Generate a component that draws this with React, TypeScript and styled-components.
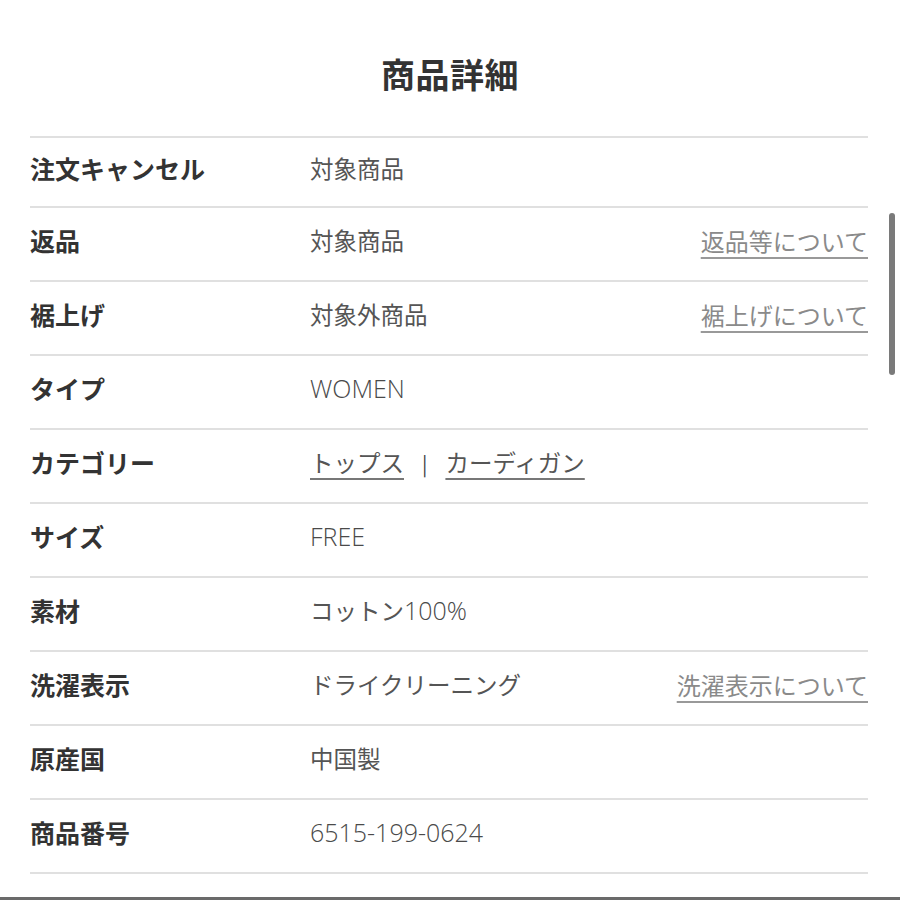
import React from "react";
import styled, { createGlobalStyle } from "styled-components";

const Global = createGlobalStyle`
  html, body { margin: 0; padding: 0; background: #fff; }
  body { font-family: "Noto Sans CJK JP", "Noto Sans", sans-serif; }
`;

const Page = styled.div`
  position: relative;
  width: 900px;
  height: 900px;
  background: #fff;
  overflow: hidden;
  box-sizing: border-box;
  border-bottom: 3px solid #6a6a6a;
`;

const Title = styled.h1`
  margin: 0;
  height: 136px;
  display: flex;
  align-items: center;
  justify-content: center;
  padding-top: 10px;
  box-sizing: border-box;
  font-size: 34px;
  font-weight: 700;
  color: #333;
  letter-spacing: 0.5px;
`;

const Table = styled.div`
  margin: 0 32px 0 30px;
  border-top: 2px solid #e0e0e0;
`;

const Row = styled.div<{ $h: number }>`
  display: grid;
  grid-template-columns: 280px 1fr auto;
  align-items: center;
  height: ${(p) => p.$h}px;
  padding-bottom: 8px;
  border-bottom: 2px solid #e0e0e0;
  box-sizing: border-box;
`;

const Label = styled.div`
  font-size: 25px;
  font-weight: 700;
  color: #333;
`;

const Value = styled.div`
  font-size: 23.5px;
  font-weight: 400;
  color: #555;
  display: flex;
  align-items: baseline;
  gap: 18px;
`;

const Latin = styled.span`
  font-family: "Open Sans", "Noto Sans", sans-serif;
  font-weight: 300;
  font-size: 25px;
  color: #4a4a4a;
`;

const ValueLink = styled.span`
  text-decoration: underline;
  text-underline-offset: 6px;
  text-decoration-thickness: 2px;
  text-decoration-color: #777;
`;

const Sep = styled.span`
  color: #444;
  font-size: 20px;
`;

const Link = styled.a`
  font-size: 24px;
  color: #8a8a8a;
  text-decoration: underline;
  text-underline-offset: 6px;
  text-decoration-thickness: 2px;
  text-decoration-color: #999;
`;

const Scrollbar = styled.div`
  position: absolute;
  left: 889px;
  top: 213px;
  width: 6px;
  height: 162px;
  border-radius: 3px;
  background: #7a7a7a;
`;

function Mixed({ text }: { text: string }) {
  const parts = text.match(/[\x20-\x7e]+|[^\x20-\x7e]+/g) || [];
  return (
    <span>
      {parts.map((p, i) =>
        /^[\x20-\x7e]+$/.test(p) ? <Latin key={i}>{p}</Latin> : <span key={i}>{p}</span>
      )}
    </span>
  );
}

type Item = { label: string; value: React.ReactNode; link?: string; h: number };

const items: Item[] = [
  { label: "注文キャンセル", value: "対象商品", h: 70 },
  { label: "返品", value: "対象商品", link: "返品等について", h: 74 },
  { label: "裾上げ", value: "対象外商品", link: "裾上げについて", h: 74 },
  { label: "タイプ", value: "WOMEN", h: 74 },
  {
    label: "カテゴリー",
    value: (
      <>
        <ValueLink>トップス</ValueLink>
        <Sep>|</Sep>
        <ValueLink>カーディガン</ValueLink>
      </>
    ),
    h: 74,
  },
  { label: "サイズ", value: "FREE", h: 74 },
  { label: "素材", value: "コットン100%", h: 74 },
  { label: "洗濯表示", value: "ドライクリーニング", link: "洗濯表示について", h: 74 },
  { label: "原産国", value: "中国製", h: 74 },
  { label: "商品番号", value: "6515-199-0624", h: 74 },
];

export default function App() {
  return (
    <Page>
      <Global />
      <Title>商品詳細</Title>
      <Table>
        {items.map((it) => (
          <Row key={it.label} $h={it.h}>
            <Label>{it.label}</Label>
            <Value>
              {typeof it.value === "string" ? <Mixed text={it.value} /> : it.value}
            </Value>
            {it.link ? <Link href="#">{it.link}</Link> : <span />}
          </Row>
        ))}
      </Table>
      <Scrollbar />
    </Page>
  );
}
